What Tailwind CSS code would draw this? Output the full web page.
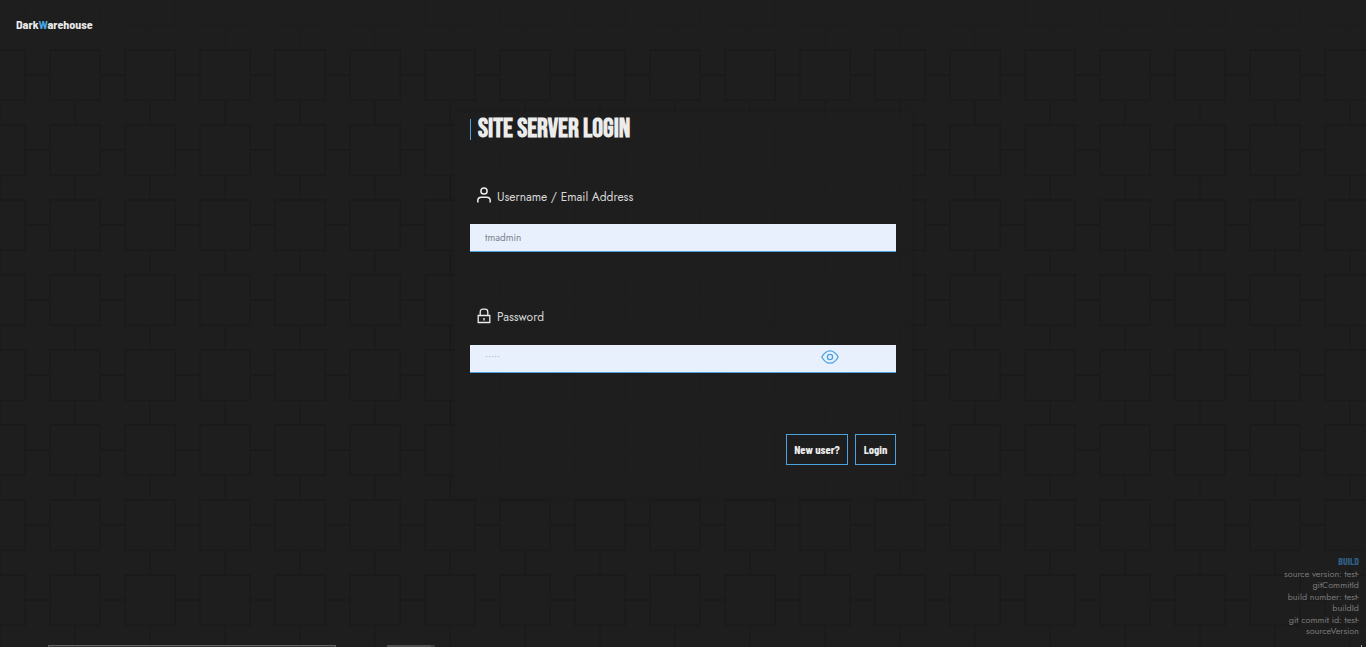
<!DOCTYPE html>
<html lang="en">
<head>
<meta charset="utf-8">
<meta name="viewport" content="width=device-width, initial-scale=1">
<title>DarkWarehouse</title>
<script src="https://cdn.jsdelivr.net/npm/@tailwindcss/browser@4"></script>
</head>
<body class="relative flex h-screen flex-col overflow-hidden bg-[#1e1e1e] font-['Jost','Lato',sans-serif] text-[#d8d8d8]">
  <!-- Tiled background -->
  <svg class="absolute inset-0 -z-10 h-full w-full" aria-hidden="true">
    <defs>
      <pattern id="tiles" width="75" height="75" patternUnits="userSpaceOnUse">
        <path d="M25.3 0V25.3H0M50 0V25.3H75M25.3 75V50H0M50 75V50H75M26 0H50M26 75H50M0 26V50M75 26V50" fill="none" stroke="#1a1a1a" stroke-width="1.8"/>
      </pattern>
    </defs>
    <rect width="100%" height="100%" fill="url(#tiles)"/>
  </svg>

  <header class="flex h-[49px] shrink-0 items-center bg-[#1e1e1e]/80 px-4 pb-0.5">
    <a href="#" class="font-['Barlow_Semi_Condensed','Barlow_Condensed','Jost',sans-serif] text-xs font-bold text-[#ececec]">Dark<span class="text-[#4aa3df]">W</span>arehouse</a>
  </header>

  <main class="flex justify-center pt-16">
    <form class="w-[456px] max-w-full bg-[#1e1e1e]/80 px-[15px] pb-8 shadow-[0_0_4px_#1e1e1e]" onsubmit="return false">
      <h1 class="mt-[6px] flex h-[21px] items-center border-l border-[#4aa3df] pb-0.5 pl-[7px] font-['Bebas_Neue','Liberation_Sans_Narrow',sans-serif] text-[27px] leading-5 font-bold whitespace-nowrap text-[#ececec]">SITE SERVER LOGIN</h1>

      <label for="user" class="mt-[45px] flex h-6 items-center gap-[3px] pl-1 text-xs">
        <svg class="mb-1 h-5 w-5 text-[#ececec]" viewBox="0 0 20 20" fill="none" stroke="currentColor" stroke-width="1.5" aria-hidden="true"><circle cx="10" cy="6" r="3.1"/><path d="M3.8 17.5V15.6Q3.8 12.3 7.3 12.3H12.7Q16.2 12.3 16.2 15.6V17.5"/></svg>
        Username / Email Address
      </label>
      <input id="user" type="text" value="tmadmin" class="mt-[15px] block h-7 w-full border-b border-[#4aa3df] bg-[#e8f0fe] px-[15px] text-[10px] text-[#7c828c] outline-none">

      <label for="pass" class="mt-[53px] flex h-6 items-center gap-[3px] pl-1 text-xs">
        <svg class="mb-0.5 h-5 w-5 text-[#ececec]" viewBox="0 0 20 20" fill="none" stroke="currentColor" stroke-width="1.3" aria-hidden="true"><path d="M4.2 9.5H15.8V16.5H4.2ZM6.2 9.5V6Q6.2 3.2 9 3.2H11Q13.8 3.2 13.8 6V9.5M10 12V14.4"/></svg>
        Password
      </label>
      <div class="relative mt-4">
        <input id="pass" type="password" value="admin" class="block h-7 w-full border-b border-[#4aa3df] bg-[#e8f0fe] px-[15px] pb-0.5 text-[10px] text-[#a4aab6] outline-none">
        <button type="button" aria-label="Show password" class="absolute top-[3px] right-[57px] text-[#4aa3df]">
          <svg class="block h-[18px] w-[18px]" viewBox="0 0 18 18" fill="none" stroke="currentColor" stroke-width="1.3" aria-hidden="true"><path d="M.8 9C3 5 5.7 2.8 9 2.8S15 5 17.2 9C15 13 12.3 15.2 9 15.2S3 13 .8 9Z"/><circle cx="9" cy="9" r="2.6"/></svg>
        </button>
      </div>

      <div class="mt-[61px] flex justify-end gap-[7px] font-['Barlow_Condensed','Jost',sans-serif] text-xs font-bold text-[#ececec]">
        <button type="button" class="h-[31px] w-[62px] border border-[#4aa3df] pb-0.5 whitespace-nowrap">New user?</button>
        <button type="submit" class="h-[31px] w-[41px] border border-[#4aa3df] pb-0.5">Login</button>
      </div>
    </form>
  </main>

  <!-- Build details -->
  <aside class="absolute right-[7px] bottom-[11px] flex w-[84px] flex-col gap-px text-right text-[9px] leading-[11px] text-[#7b7b7b]">
    <p class="font-['Barlow_Condensed','Jost',sans-serif] text-[10px] font-bold text-[#2f6289]">BUILD</p>
    <p>source version: test-<wbr>gitCommitId</p>
    <p>build number: test-<wbr>buildId</p>
    <p>git commit id: test-<wbr>sourceVersion</p>
  </aside>

  <!-- Top edges of the panels docked under the window -->
  <div class="absolute bottom-0 left-12 flex h-[2px] gap-[51px]" aria-hidden="true">
    <div class="w-72 border border-b-0 border-[#606060] bg-[#333]"></div>
    <div class="w-12 border-r-4 border-[#3b3b3b] bg-[#4d4d4d]"></div>
  </div>
  <div class="absolute right-1 bottom-0 h-[2px] w-px bg-[#aaa]" aria-hidden="true"></div>
</body>
</html>
